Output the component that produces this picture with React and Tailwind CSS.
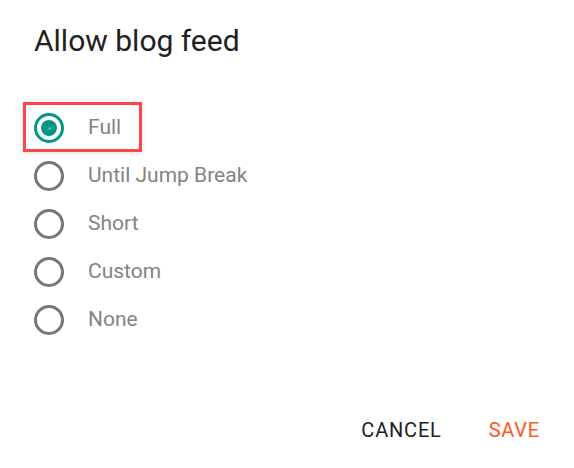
const options = ["Full", "Until Jump Break", "Short", "Custom", "None"];

function Radio({ checked }) {
  return (
    <span
      className={
        "flex h-[30px] w-[30px] shrink-0 items-center justify-center rounded-full border-[3px] " +
        (checked ? "border-[#009688]" : "border-[#767676]")
      }
    >
      {checked && (
        <span className="flex h-[16px] w-[16px] items-center justify-center rounded-full bg-[#009688]">
          <span className="h-[3px] w-[3px] rounded-full bg-[#5fb8ae]" />
        </span>
      )}
    </span>
  );
}

export default function App() {
  return (
    <div
      className="relative h-[468px] w-[574px] bg-white"
      style={{ fontFamily: "Roboto, 'Noto Sans', sans-serif" }}
    >
      <div className="px-[34px] pt-[22px]">
        <h1 className="text-[30px] leading-[38px] font-normal text-[#212121]">Allow blog feed</h1>

        <ul className="mt-[44px]">
          {options.map((opt, i) => (
            <li key={opt} className="flex h-[48px] items-center">
              <Radio checked={i === 0} />
              <span className="ml-[24px] text-[21px] text-[#838383]">{opt}</span>
            </li>
          ))}
        </ul>
      </div>

      <div className="absolute left-[23px] top-[102px] h-[50px] w-[119px] border-[3px] border-[#ff4646] shadow-[0_1px_4px_rgba(0,0,0,0.15)]" />

      <div className="absolute bottom-[24px] right-[34px] flex items-center gap-[47px] text-[20px] font-normal leading-[28px] tracking-[0.8px]">
        <button className="text-[#212121]">CANCEL</button>
        <button className="text-[#ff5722]">SAVE</button>
      </div>
    </div>
  );
}
